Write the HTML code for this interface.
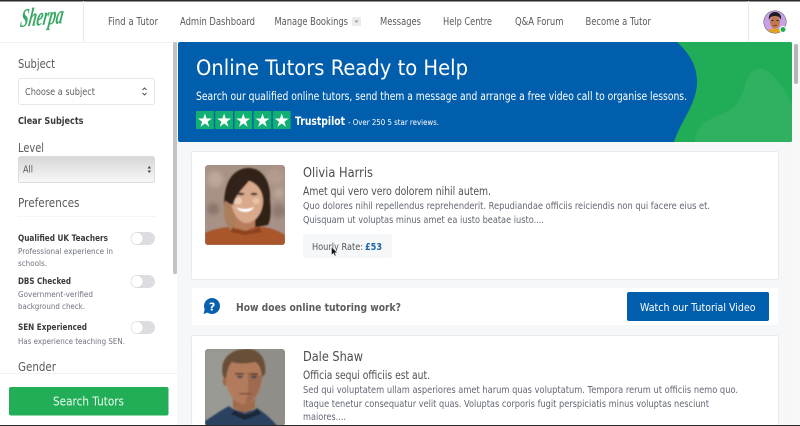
<!DOCTYPE html>
<html>
<head>
<meta charset="utf-8">
<style>
html,body{margin:0;padding:0;width:800px;height:426px;overflow:hidden;background:#fff}
svg{display:block}
text{font-family:"DejaVu Sans",sans-serif;white-space:pre}
.nav{font-size:10.300px;fill:#5a5a5a}
.h{font-size:12.500px;fill:#5a5a5a}
.b{font-size:8.800px;fill:#3a3a3a;font-weight:bold}
.s{font-size:8.300px;fill:#6f7380}
.p{font-size:9.900px;fill:#636775}
.l{font-size:11.400px;fill:#505050}
.n{font-size:13px;fill:#4c4c4c}
</style>
</head>
<body>
<svg width="800" height="426" viewBox="0 0 800 426" xmlns="http://www.w3.org/2000/svg">
<defs>
<filter id="bl1"><feGaussianBlur stdDeviation="0.7"/></filter>
<filter id="bl3"><feGaussianBlur stdDeviation="2.500"/></filter>
<clipPath id="c1"><rect x="205" y="165" width="80" height="80" rx="3"/></clipPath>
<clipPath id="c2"><rect x="205" y="349" width="80" height="77" rx="3"/></clipPath>
<clipPath id="c3"><circle cx="775" cy="22" r="11"/></clipPath>
<clipPath id="c4"><rect x="178" y="42" width="614" height="100" rx="2"/></clipPath>
<linearGradient id="sel" x1="0" y1="0" x2="0" y2="1"><stop offset="0" stop-color="#d6d6d8"/><stop offset=".55" stop-color="#e9e9ea"/><stop offset="1" stop-color="#f8f8f8"/></linearGradient>
</defs>

<!-- page -->
<rect width="800" height="426" fill="#f6f7f9"/>
<rect x="793" y="42" width="7" height="384" fill="#f8f8f9"/>
<rect x="794" y="44" width="4" height="40" rx="2" fill="#b5b5b5"/>

<!-- header -->
<rect width="800" height="42" fill="#fff"/>
<rect width="800" height="1.500" fill="#2a2a2a"/>
<rect x="83" y="1" width="1" height="41" fill="#e9e9e9"/>
<rect x="748" y="1" width="1" height="41" fill="#e9e9e9"/>
<text x="0" y="0" transform="translate(19.500 27) rotate(-5) skewX(-14)" textLength="43" lengthAdjust="spacingAndGlyphs" style="font-family:'Liberation Serif',serif;font-style:italic;font-weight:bold;font-size:26px;fill:#35a862">Sherpa</text>
<text class="nav" x="108" y="25" textLength="50" lengthAdjust="spacingAndGlyphs">Find a Tutor</text>
<text class="nav" x="180" y="25" textLength="75" lengthAdjust="spacingAndGlyphs">Admin Dashboard</text>
<text class="nav" x="274.500" y="25" textLength="73.500" lengthAdjust="spacingAndGlyphs">Manage Bookings</text>
<rect x="352" y="17" width="9" height="9" rx="1" fill="#ebebeb"/>
<path d="M354.500 20.500h4l-2 2.500z" fill="#9a9a9a"/>
<text class="nav" x="380" y="25" textLength="41" lengthAdjust="spacingAndGlyphs">Messages</text>
<text class="nav" x="443" y="25" textLength="49" lengthAdjust="spacingAndGlyphs">Help Centre</text>
<text class="nav" x="515" y="25" textLength="48.500" lengthAdjust="spacingAndGlyphs">Q&amp;A Forum</text>
<text class="nav" x="585.500" y="25" textLength="65.500" lengthAdjust="spacingAndGlyphs">Become a Tutor</text>

<!-- avatar -->
<circle cx="775" cy="22" r="11.500" fill="#555"/>
<g clip-path="url(#c3)">
<rect x="763" y="10" width="24" height="24" fill="#c99fe6"/>
<path d="M767 34c0-4 4-5.500 8-5.500s8 1.500 8 5.500z" fill="#e6a11f"/>
<ellipse cx="775" cy="22" rx="5" ry="6.500" fill="#c07a50"/>
<path d="M769 20c-1-6 3-8 6-8s7 2 6 8c-1-3-3-4-6-4s-5 1-6 4z" fill="#1e1e22"/>
<rect x="771.500" y="20" width="2" height="1" fill="#222"/><rect x="776.500" y="20" width="2" height="1" fill="#222"/>
<rect x="773" y="25" width="4" height="1" fill="#8e3b2c"/>
</g>
<circle cx="783" cy="29.500" r="3.600" fill="#fff"/>
<circle cx="783" cy="29.500" r="2.500" fill="#22ad57"/>

<!-- sidebar -->
<rect x="0" y="42" width="177" height="384" fill="#fff"/>
<rect x="0" y="42" width="173" height="1" fill="#f0f0f2"/>
<rect x="173" y="42" width="4" height="232" rx="1.500" fill="#c3c3c5"/>
<text class="h" x="18" y="68" textLength="37" lengthAdjust="spacingAndGlyphs">Subject</text>
<rect x="18.500" y="78.500" width="136" height="26" rx="2" fill="#fff" stroke="#e7e7ea"/>
<text x="25" y="95" textLength="70" lengthAdjust="spacingAndGlyphs" style="font-size:9.900px;fill:#5f5f5f">Choose a subject</text>
<path d="M142.500 90l2-2 2 2M142.500 93l2 2 2-2" fill="none" stroke="#555" stroke-width="1"/>
<text class="b" x="18" y="124" textLength="65.500" lengthAdjust="spacingAndGlyphs" style="font-size:9.300px">Clear Subjects</text>
<text class="h" x="18" y="152" textLength="26" lengthAdjust="spacingAndGlyphs">Level</text>
<rect x="18.500" y="156.500" width="136" height="26" rx="2" fill="url(#sel)" stroke="#dcdcde"/>
<text x="23" y="172.500" textLength="10" lengthAdjust="spacingAndGlyphs" style="font-size:9.900px;fill:#555">All</text>
<path d="M147.500 168.500l1.800-2.500 1.800 2.500zM147.500 170.500l1.800 2.500 1.800-2.500z" fill="#444"/>
<text class="h" x="18" y="207" textLength="61.500" lengthAdjust="spacingAndGlyphs">Preferences</text>
<line x1="18" y1="216.500" x2="155" y2="216.500" stroke="#ececee" stroke-dasharray="1 1"/>

<text class="b" x="18" y="241" textLength="90" lengthAdjust="spacingAndGlyphs">Qualified UK Teachers</text>
<text class="s" x="18" y="254" textLength="95" lengthAdjust="spacingAndGlyphs">Professional experience in</text>
<text class="s" x="18" y="266" textLength="29" lengthAdjust="spacingAndGlyphs">schools.</text>
<rect x="131" y="232" width="24" height="13" rx="6.500" fill="#dcdce1"/>
<circle cx="137" cy="238.500" r="6" fill="#fff" stroke="#d5d5da" stroke-width=".6"/>

<text class="b" x="18" y="284" textLength="53" lengthAdjust="spacingAndGlyphs">DBS Checked</text>
<text class="s" x="18" y="297" textLength="75" lengthAdjust="spacingAndGlyphs">Government-verified</text>
<text class="s" x="18" y="309" textLength="67" lengthAdjust="spacingAndGlyphs">background check.</text>
<rect x="131" y="275" width="24" height="13" rx="6.500" fill="#dcdce1"/>
<circle cx="137" cy="281.500" r="6" fill="#fff" stroke="#d5d5da" stroke-width=".6"/>

<text class="b" x="18" y="330" textLength="69" lengthAdjust="spacingAndGlyphs">SEN Experienced</text>
<text class="s" x="18" y="344" textLength="107" lengthAdjust="spacingAndGlyphs">Has experience teaching SEN.</text>
<rect x="131" y="321" width="24" height="13" rx="6.500" fill="#dcdce1"/>
<circle cx="137" cy="327.500" r="6" fill="#fff" stroke="#d5d5da" stroke-width=".6"/>

<text class="h" x="18" y="371" textLength="38" lengthAdjust="spacingAndGlyphs">Gender</text>
<rect x="0" y="373" width="177" height="53" fill="#fff"/>
<rect x="0" y="373" width="177" height="1" fill="#f0f0f2"/>
<rect x="9" y="387" width="159.500" height="28.500" rx="2" fill="#22ad57"/>
<text x="53" y="405.500" textLength="71" lengthAdjust="spacingAndGlyphs" style="font-size:12px;fill:#eafbf0">Search Tutors</text>

<!-- banner -->
<g clip-path="url(#c4)">
<rect x="178" y="42" width="614" height="100" fill="#015eac"/>
<path d="M677 42C690 54 697 66 697 82C697 104 680 122 674 142H792V42z" fill="#21ad57"/>
<path d="M695 142C695 128 705 120 722 114C738 108 742 96 746 82C750 70 758 66 766 70C776 76 786 92 792 104V142z" fill="#30b061"/>
</g>
<text x="196" y="75" textLength="272" lengthAdjust="spacingAndGlyphs" style="font-size:21.500px;fill:#fff">Online Tutors Ready to Help</text>
<text x="196" y="100" textLength="491" lengthAdjust="spacingAndGlyphs" style="font-size:11.400px;fill:#fff">Search our qualified online tutors, send them a message and arrange a free video call to organise lessons.</text>
<g fill="#0fb071">
<rect x="196" y="111" width="17.800" height="18"/><rect x="215.200" y="111" width="17.800" height="18"/><rect x="234.400" y="111" width="17.800" height="18"/><rect x="253.600" y="111" width="17.800" height="18"/><rect x="272.800" y="111" width="17.800" height="18"/>
</g>
<g fill="#fff">
<path d="M204.900 113.500l1.700 5h5.300l-4.300 3.100 1.600 5.100-4.300-3.200-4.300 3.200 1.600-5.100-4.300-3.100h5.300z"/>
<path d="M224.100 113.500l1.700 5h5.300l-4.300 3.100 1.600 5.100-4.300-3.200-4.300 3.200 1.600-5.100-4.300-3.100h5.300z"/>
<path d="M243.300 113.500l1.700 5h5.300l-4.300 3.100 1.600 5.100-4.300-3.200-4.300 3.200 1.600-5.100-4.300-3.100h5.300z"/>
<path d="M262.500 113.500l1.700 5h5.300l-4.300 3.100 1.600 5.100-4.300-3.200-4.300 3.200 1.600-5.100-4.300-3.100h5.300z"/>
<path d="M281.700 113.500l1.700 5h5.300l-4.300 3.100 1.600 5.100-4.300-3.200-4.300 3.200 1.600-5.100-4.300-3.100h5.300z"/>
</g>
<text x="295" y="125" textLength="50" lengthAdjust="spacingAndGlyphs" style="font-size:11.400px;fill:#fff;font-weight:bold">Trustpilot</text>
<text x="348" y="125" textLength="91" lengthAdjust="spacingAndGlyphs" style="font-size:8.300px;fill:#fff">- Over 250 5 star reviews.</text>

<!-- card 1 -->
<rect x="191.500" y="151.500" width="587" height="128" rx="2" fill="#fff" stroke="#e9eaed"/>
<g clip-path="url(#c1)">
<rect x="205" y="165" width="80" height="80" fill="#a89186"/>
<g transform="translate(205 165)">
<g filter="url(#bl3)">
<circle cx="10" cy="14" r="8" fill="#bda79b"/><circle cx="70" cy="12" r="8" fill="#b59b8f"/><circle cx="8" cy="44" r="6" fill="#8a746c"/><circle cx="74" cy="46" r="7" fill="#8f7a72"/><circle cx="74" cy="28" r="5" fill="#bda79b"/>
</g>
<g filter="url(#bl1)">
<path d="M0 80V68C8 64 16 63 24 62H58C66 63 74 66 80 70V80z" fill="#a8562a"/>
<path d="M20 50C17 28 22 5 42 3C58 2 66 18 65 34C66 46 66 54 63 60L52 62H30L24 62z" fill="#332219"/>
<path d="M20 36C17 48 20 60 27 67L34 62L29 40z" fill="#ab7f5c"/>
<path d="M30 50H50V62L40 66L30 62z" fill="#b87d5c"/>
<path d="M26 34C26 22 36 16 44 16C52 18 58 26 58 36C58 48 50 58 42 58C33 58 26 46 26 34z" fill="#d9a98b"/>
<ellipse cx="33" cy="36" rx="4" ry="3.500" fill="#ecccb5"/>
<ellipse cx="51" cy="36" rx="3.500" ry="3" fill="#e9c4aa"/>
<path d="M23 38C24 20 32 8 46 11C44 20 32 25 28 40z" fill="#33211a"/>
<path d="M44 10C52 13 58 22 60 36L64 34L60 12z" fill="#33211a"/>
<ellipse cx="36" cy="29" rx="3.500" ry="1.200" fill="#46312a"/>
<ellipse cx="49" cy="29" rx="3.500" ry="1.200" fill="#46312a"/>
<path d="M31 42C35 44.500 44 44.500 49 42C46 48.500 35 48.500 31 42z" fill="#fff"/>
<path d="M28 62C33 67 48 67 54 62L57 67L40 70L25 67z" fill="#8b421f"/>
</g>
</g>
</g>
<text class="n" x="303" y="177" textLength="70" lengthAdjust="spacingAndGlyphs">Olivia Harris</text>
<text class="l" x="303" y="195" textLength="188" lengthAdjust="spacingAndGlyphs">Amet qui vero vero dolorem nihil autem.</text>
<text class="p" x="303" y="209" textLength="407" lengthAdjust="spacingAndGlyphs">Quo dolores nihil repellendus reprehenderit. Repudiandae officiis reiciendis non qui facere eius et.</text>
<text class="p" x="303" y="223" textLength="241" lengthAdjust="spacingAndGlyphs">Quisquam ut voluptas minus amet ea iusto beatae iusto....</text>
<rect x="303" y="234" width="89" height="24" rx="2" fill="#f6f7f9"/>
<text x="312" y="250" textLength="51" lengthAdjust="spacingAndGlyphs" style="font-size:9.900px;fill:#555">Hourly Rate:</text>
<text x="365" y="250" textLength="17" lengthAdjust="spacingAndGlyphs" style="font-size:9.900px;font-weight:bold;fill:#1a64a8">£53</text>
<path d="M331.500 247v8l2-1.800 1.300 2.800 1.200-.6-1.300-2.600h2.600z" fill="#111" stroke="#fff" stroke-width=".4"/>

<!-- tutorial strip -->
<rect x="192" y="288" width="586" height="37" rx="2" fill="#fff"/>
<circle cx="212" cy="306" r="8" fill="#0a5fae"/>
<path d="M205 308l-1.500 6 5-1.800z" fill="#0a5fae"/>
<text x="208.900" y="310.500" textLength="6.500" lengthAdjust="spacingAndGlyphs" style="font-size:11px;font-weight:bold;fill:#fff">?</text>
<text x="236" y="311" textLength="165" lengthAdjust="spacingAndGlyphs" style="font-size:10.500px;font-weight:bold;fill:#5c5c5c">How does online tutoring work?</text>
<rect x="627" y="292" width="142" height="29" rx="2" fill="#015eac"/>
<text x="640" y="311" textLength="115.500" lengthAdjust="spacingAndGlyphs" style="font-size:10.800px;fill:#fff">Watch our Tutorial Video</text>

<!-- card 2 -->
<rect x="191.500" y="335.500" width="587" height="100" rx="2" fill="#fff" stroke="#e9eaed"/>
<g clip-path="url(#c2)">
<rect x="205" y="349" width="80" height="77" fill="#8f8e88"/>
<g transform="translate(205 346)">
<rect x="0" y="3" width="30" height="77" fill="#9a9a94" filter="url(#bl3)"/>
<g filter="url(#bl1)">
<path d="M0 80V75C8 70 16 64 24 60C30 66 44 68 52 62C58 66 66 72 72 80z" fill="#2b4260"/>
<path d="M28 50V62L40 67L50 62V50z" fill="#a06a4c"/>
<path d="M30 64C36 70 46 70 52 63L56 68L40 74L26 68z" fill="#1c2636"/>
<ellipse cx="20.500" cy="35" rx="2.800" ry="5" fill="#a06a4c"/>
<ellipse cx="39" cy="32" rx="18" ry="26" fill="#b27c5c"/>
<path d="M42 26C44 36 44 48 40 58C50 56 56 42 57 30z" fill="#94604a" opacity=".65"/>
<path d="M18 30C14 14 24 4 40 3C54 2 62 12 60 28L57 31C56 22 54 18 50 16C42 18 32 18 27 16C23 20 22 26 21 33z" fill="#6b4f38"/>
<rect x="30" y="27" width="9" height="1.800" fill="#5c4433"/><rect x="45" y="27" width="8" height="1.800" fill="#5c4433"/>
<ellipse cx="35" cy="31" rx="3" ry="1.200" fill="#3d4a55"/><ellipse cx="49" cy="31" rx="3" ry="1.200" fill="#3d4a55"/>
<rect x="34" y="47" width="12" height="1.300" fill="#7a4638"/>
</g>
</g>
</g>
<text class="n" x="303" y="361" textLength="60" lengthAdjust="spacingAndGlyphs">Dale Shaw</text>
<text class="l" x="303" y="379" textLength="127" lengthAdjust="spacingAndGlyphs">Officia sequi officiis est aut.</text>
<text class="p" x="303" y="393" textLength="435" lengthAdjust="spacingAndGlyphs">Sed qui voluptatem ullam asperiores amet harum quas voluptatum. Tempora rerum ut officiis nemo quo.</text>
<text class="p" x="303" y="407" textLength="406" lengthAdjust="spacingAndGlyphs">Itaque tenetur consequatur velit quas. Voluptas corporis fugit perspiciatis minus voluptas nesciunt</text>
<text class="p" x="303" y="420" textLength="43" lengthAdjust="spacingAndGlyphs">maiores....</text>

<!-- bottom bar -->
<rect x="0" y="425" width="800" height="1" fill="#2a2a2a"/>
</svg>
</body>
</html>
